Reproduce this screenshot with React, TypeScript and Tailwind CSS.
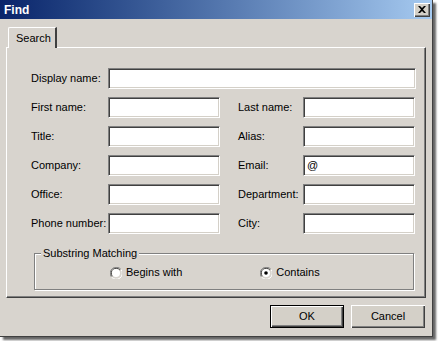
import React from "react";

const font = { fontFamily: '"Liberation Sans", Arial, sans-serif' };

function Field({ w }: { w: string }) {
  return (
    <div
      className={`${w} h-[21px] bg-white border border-t-[#808080] border-l-[#808080] border-r-white border-b-white shadow-[inset_1px_1px_0_#404040,inset_-1px_-1px_0_#d4d0c8] flex items-center pl-[3px] text-[11px] text-black`}
    />
  );
}

function EmailField() {
  return (
    <div className="w-[112px] h-[21px] bg-white border border-t-[#808080] border-l-[#808080] border-r-white border-b-white shadow-[inset_1px_1px_0_#404040,inset_-1px_-1px_0_#d4d0c8] flex items-center pl-[3px] text-[11px] text-black">
      @
    </div>
  );
}

function Radio({ checked }: { checked?: boolean }) {
  return (
    <svg width="12" height="12" viewBox="0 0 12 12" className="shrink-0">
      <path d="M11 2.5 A5.5 5.5 0 0 0 1.5 10" fill="none" stroke="#808080" strokeWidth="1" />
      <path d="M10 3.2 A4.5 4.5 0 0 0 2.3 9.2" fill="none" stroke="#404040" strokeWidth="1" />
      <circle cx="6" cy="6" r="4" fill="white" />
      <path d="M1.5 10 A5.5 5.5 0 0 0 11 2.5" fill="none" stroke="#ffffff" strokeWidth="1" />
      {checked && <circle cx="6" cy="6" r="1.8" fill="black" />}
    </svg>
  );
}

function Btn({ label, def }: { label: string; def?: boolean }) {
  return (
    <div
      className={`w-[74px] h-[23px] flex items-center justify-center text-[11px] text-black bg-[#d4d0c8] ${
        def
          ? "border border-black shadow-[inset_1px_1px_0_#ffffff,inset_-1px_-1px_0_#404040,inset_-2px_-2px_0_#808080]"
          : "shadow-[inset_1px_1px_0_#ffffff,inset_-1px_-1px_0_#404040,inset_-2px_-2px_0_#808080]"
      }`}
    >
      {label}
    </div>
  );
}

export default function App() {
  return (
    <div className="w-[439px] h-[341px] bg-white" style={font}>
      <div className="w-[433px] h-[337px] bg-[#d8d4ce] flex flex-col shadow-[3px_3px_2px_rgba(0,0,0,0.6)] border-r border-b border-r-[#404040] border-b-[#404040]">
        {/* title bar */}
        <div className="h-[19px] flex items-center justify-between pl-[4px] pr-[2px] bg-gradient-to-r from-[#0a246a] to-[#a6caf0]">
          <span className="text-white font-bold text-[12px] leading-none">Find</span>
          <div className="w-[16px] h-[14px] bg-[#d4d0c8] shadow-[inset_1px_1px_0_#ffffff,inset_-1px_-1px_0_#404040,inset_-2px_-2px_0_#808080] flex items-center justify-center">
            <svg width="8" height="7" viewBox="0 0 8 7">
              <path d="M0 0 L2 0 L4 2 L6 0 L8 0 L5 3.5 L8 7 L6 7 L4 5 L2 7 L0 7 L3 3.5 Z" fill="black" />
            </svg>
          </div>
        </div>

        {/* body */}
        <div className="pl-[6px] pr-[6px] pt-[8px] flex flex-col">
          {/* tab row */}
          <div className="flex h-[20px] pl-[2px]">
            <div className="w-[49px] h-[21px] relative z-10 bg-[#d8d4ce] border-t border-l border-t-white border-l-white rounded-tl-[2px] border-r-2 border-r-[#404040] flex items-center pl-[7px] text-[11px] text-black">
              Search
            </div>
          </div>
          {/* panel */}
          <div className="h-[251px] border-t border-l border-t-white border-l-white border-r border-b border-r-[#404040] border-b-[#404040] shadow-[inset_-1px_-1px_0_#808080] flex flex-col pl-[24px] pt-[20px] text-[11px] text-black">
            <div className="flex flex-col gap-[8px]">
              <div className="flex items-center">
                <span className="w-[77px]">Display name:</span>
                <Field w="w-[308px]" />
              </div>
              {[
                ["First name:", "Last name:"],
                ["Title:", "Alias:"],
                ["Company:", "Email:"],
                ["Office:", "Department:"],
                ["Phone number:", "City:"],
              ].map(([a, b]) => (
                <div key={a} className="flex items-center">
                  <span className="w-[77px]">{a}</span>
                  <Field w="w-[112px]" />
                  <span className="w-[65px] ml-[18px]">{b}</span>
                  {b === "Email:" ? <EmailField /> : <Field w="w-[112px]" />}
                </div>
              ))}
            </div>

            {/* group box */}
            <div className="relative ml-[3px] mt-[19px] w-[380px] h-[37px] border border-[#808080] shadow-[1px_1px_0_#ffffff,inset_1px_1px_0_#ffffff] flex items-center pt-[2px]">
              <span className="absolute left-[6px] top-[-8px] bg-[#d8d4ce] px-[2px] leading-[14px]">
                Substring Matching
              </span>
              <div className="flex items-center gap-[4px] ml-[75px]">
                <Radio />
                <span>Begins with</span>
              </div>
              <div className="flex items-center gap-[4px] ml-[78px]">
                <Radio checked />
                <span>Contains</span>
              </div>
            </div>
          </div>

          {/* buttons */}
          <div className="flex justify-end gap-[7px] mt-[7px] pr-[1px]">
            <Btn label="OK" def />
            <Btn label="Cancel" />
          </div>
        </div>
      </div>
    </div>
  );
}
